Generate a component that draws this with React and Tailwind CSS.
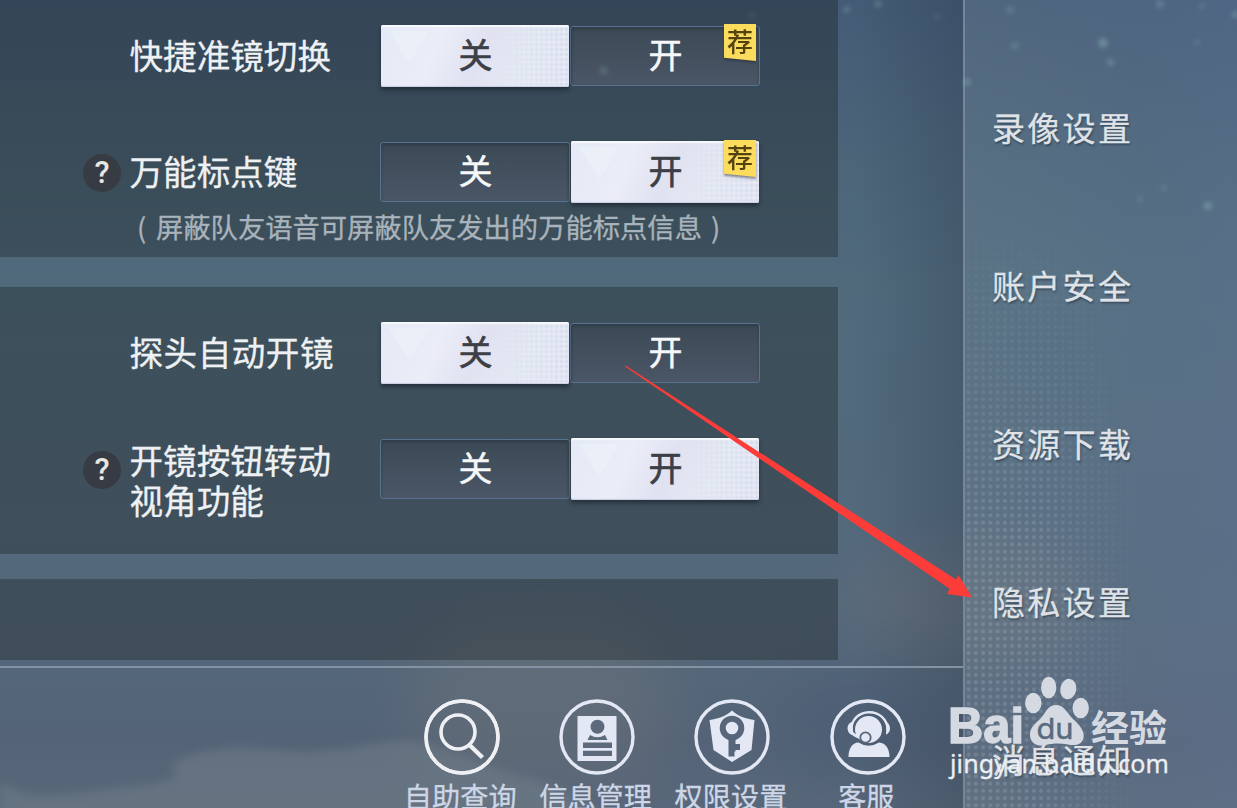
const MENU = ['录像设置', '账户安全', '资源下载', '隐私设置', '消息通知']

const SPARKS = [
  { x: 846, y: 9, s: 7, o: 0.16 },
  { x: 878, y: 4, s: 8, o: 0.14 },
  { x: 937, y: 16, s: 7, o: 0.06 },
  { x: 1010, y: 10, s: 8, o: 0.12 },
  { x: 1015, y: 46, s: 8, o: 0.12 },
  { x: 1103, y: 43, s: 10, o: 0.22 },
  { x: 1110, y: 62, s: 7, o: 0.2 },
  { x: 967, y: 82, s: 8, o: 0.18 },
  { x: 1160, y: 4, s: 8, o: 0.16 },
  { x: 1202, y: 6, s: 6, o: 0.12 },
  { x: 1197, y: 42, s: 6, o: 0.1 },
  { x: 1235, y: 14, s: 7, o: 0.2 },
  { x: 1164, y: 188, s: 6, o: 0.1 },
  { x: 1140, y: 199, s: 6, o: 0.1 },
  { x: 1208, y: 206, s: 8, o: 0.22 },
  { x: 603, y: 70, s: 9, o: 0.12 },
  { x: 752, y: 15, s: 6, o: 0.08 },
]

export default function App() {
  return (
    <div
      className="relative flex h-[808px] w-[1237px] overflow-hidden bg-[linear-gradient(180deg,#445b76_0%,#4c6579_20%,#506a7c_35%,#53697c_65%,#54677a_80%,#546377_92%,#586779_100%)]"
      style={{ fontFamily: '"Noto Sans CJK SC", sans-serif' }}
    >
      <Clouds />
      <div className="relative flex w-[963px] shrink-0 flex-col bg-[linear-gradient(90deg,transparent_89%,rgba(28,40,58,0.22)_100%)]">
        <main className="flex h-[666px] w-[838px] shrink-0 flex-col">
          <Panel className="h-[257px] pt-[25px]">
            <Row label="快捷准镜切换" value="off" recommended />
            <Row label="万能标点键" value="on" help recommended className="mt-[54px]" />
            <p className="mt-[5px] whitespace-pre pl-[137px] text-[27.3px] leading-[36px] text-[#a9b3bb] [-webkit-text-stroke:0.3px]">
              <span className="inline-block w-[19px]">(</span>屏蔽队友语音可屏蔽队友发出的万能标点信息<span className="ml-[9px]">)</span>
            </p>
          </Panel>
          <Panel className="mt-[30px] h-[267px] pt-[35px]">
            <Row label="探头自动开镜" value="off" labelClass="tracking-[0.5px]" />
            <Row label={'开镜按钮转动\n视角功能'} value="on" help className="mt-[54px]" labelClass="mt-[24px]" />
          </Panel>
          <Panel className="mt-[25px] h-[81px]" />
        </main>
        <footer className="flex flex-1 border-t-2 border-[#8492a3]">
          <div className="flex pl-[394px] pt-[31px]">
            <Shortcut label="自助查询"><SearchIcon /></Shortcut>
            <Shortcut label="信息管理"><ProfileIcon /></Shortcut>
            <Shortcut label="权限设置"><ShieldIcon /></Shortcut>
            <Shortcut label="客服"><SupportIcon /></Shortcut>
          </div>
        </footer>
      </div>

      <aside className="relative flex flex-1 flex-col border-l-2 border-[#75869a] bg-[linear-gradient(90deg,rgba(150,168,180,0.15),rgba(110,130,160,0.24)_65%,rgba(106,126,162,0.3))] pt-[48px]">
        <div className="absolute inset-x-0 bottom-0 top-[200px] bg-[radial-gradient(circle,rgba(195,215,225,0.2)_1.3px,transparent_2.6px)] bg-[size:7.25px_7.25px] mask-intersect mask-[linear-gradient(90deg,black_25%,transparent_64%),linear-gradient(180deg,transparent,black_55%)]" />
        {MENU.map((name) => (
          <a
            key={name}
            className="relative flex h-[158px] shrink-0 items-center pl-[27px] pt-[1px] text-[33px] tracking-[2.3px] text-[#dfe3e8] [-webkit-text-stroke:0.3px] text-shadow-[1px_2px_2px_rgba(40,50,65,0.6)]"
          >
            {name}
          </a>
        ))}
      </aside>

      {SPARKS.map((p) => (
        <i
          key={p.x}
          className="absolute rounded-full bg-[#9fd0c8] blur-[2px]"
          style={{ left: p.x - p.s / 2, top: p.y - p.s / 2, width: p.s, height: p.s, opacity: p.o * 1.4 }}
        />
      ))}
      <Arrow />
      <Watermark />
    </div>
  )
}

function Clouds() {
  return (
    <div className="absolute inset-0">
      <div className="absolute left-[410px] top-[620px] h-[160px] w-[260px] rounded-full bg-[#7a7b78] opacity-30 blur-[30px]" />
      <div className="absolute left-[850px] top-[545px] h-[110px] w-[240px] rounded-full bg-[#77777c] opacity-30 blur-[24px]" />
      <svg viewBox="0 0 620 130" className="absolute left-0 top-[700px] h-[130px] w-[620px] blur-[5px]">
        <path
          d="M-20 78 C0 80 12 88 26 94 C60 98 100 90 150 84 C176 80 182 74 170 66 C180 58 190 52 215 50 C250 44 275 52 310 52 C345 50 370 44 400 40 C430 40 470 60 520 76 C560 86 600 100 620 140 H-20z"
          fill="#737f89"
          opacity="0.5"
        />
      </svg>
      <div className="absolute left-[780px] top-[670px] h-[110px] w-[160px] rounded-full bg-[#485a72] opacity-40 blur-[26px]" />
    </div>
  )
}

function Panel({ className, children }) {
  return <section className={`shrink-0 bg-[#101410]/30 ${className}`}>{children}</section>
}

function Row({ label, value, help, recommended, className = '', labelClass = '' }) {
  return (
    <div className={`flex h-[62px] items-center pl-[83px] ${className}`}>
      <div className="w-[46px] pt-[2px]">
        {help && (
          <div className="flex size-[38px] items-center justify-center rounded-full bg-[#373b43] font-['Roboto'] text-[31px] font-medium text-[#e6e6e2]">
            ?
          </div>
        )}
      </div>
      <div className={`w-[251px] whitespace-pre pb-[3px] pl-[0.5px] text-[33.6px] leading-[40px] text-[#eef1f3] [-webkit-text-stroke:0.3px] ${labelClass}`}>
        {label}
      </div>
      <Toggle value={value} recommended={recommended} />
    </div>
  )
}

function Toggle({ value, recommended }) {
  return (
    <div className="relative flex h-[62px] w-[380px]">
      <Option active={value === 'off'}>关</Option>
      <Option active={value === 'on'}>开</Option>
      {recommended && (
        <div className="absolute right-[4px] top-[-1px] drop-shadow-[0_2px_1px_rgba(40,40,50,0.5)]">
          <div className="h-[37px] w-[32px] bg-[#fbdc5c] text-center text-[26px] font-medium leading-[33px] text-[#54430f] [clip-path:polygon(0_0,100%_0,100%_100%,0_91%)]">
            荐
          </div>
        </div>
      )}
    </div>
  )
}

function Option({ active, children }) {
  if (!active) {
    return (
      <div className="my-[1px] flex w-[190px] items-center justify-center rounded-[3px] border-[1.5px] border-[#587291] bg-linear-to-b from-[#3b4955] to-[#4b5666] pb-[5px] pl-[1px] text-[34px] leading-none text-[#f6f7f8] [-webkit-text-stroke:0.5px] shadow-[inset_0_2px_3px_rgba(30,40,50,0.4)]">
        {children}
      </div>
    )
  }
  return (
    <div className="relative mx-[1px] flex w-[188px] items-center justify-center rounded-[2px] bg-[linear-gradient(115deg,#e4eaf6_0%,#ebedf8_30%,#e1e2f1_52%,#e6eaf4_75%,#e9e8f6_100%)] pb-[5px] pl-[1px] text-[34px] leading-none text-[#3c4046] [-webkit-text-stroke:0.7px] shadow-[0_3px_4px_rgba(20,28,38,0.6),inset_0_2px_1px_rgba(255,255,255,0.7),inset_0_-1px_1px_#c9cbe0]">
      <div className="absolute left-[8px] top-[6px] h-[32px] w-[40px] bg-white/20 [clip-path:polygon(0_0,100%_0,50%_100%)]" />
      <div className="absolute inset-y-[2px] right-0 w-[75px] bg-[radial-gradient(circle,rgba(190,208,226,0.4)_1px,transparent_2.4px)] bg-[size:5px_5px] mask-l-from-10%" />
      <span className="relative">{children}</span>
    </div>
  )
}

function Shortcut({ label, children }) {
  return (
    <div className="flex w-[135.4px] flex-col items-center text-[#e3e8f4]">
      <svg viewBox="0 0 76 76" className="size-[76px] shrink-0">
        <circle cx="38" cy="38" r="36" fill="none" stroke="currentColor" strokeWidth="3.4" />
        {children}
      </svg>
      <span className="mt-[4px] -ml-[3px] whitespace-nowrap text-[28.2px] leading-[34px] text-[#cdd6e6] [-webkit-text-stroke:0.3px]">{label}</span>
    </div>
  )
}

function SearchIcon() {
  return (
    <g fill="none" stroke="#eef0f4" strokeWidth="3.6">
      <circle cx="38" cy="38" r="36" />
      <circle cx="34" cy="33" r="17" />
      <path d="M45.500 46 L58.500 58.500" strokeWidth="4.400" />
    </g>
  )
}

function ProfileIcon() {
  return (
    <g fill="currentColor">
      <path d="M18.500 17h39v45h-39z" />
      <g fill="#5c6a7b">
        <circle cx="38.500" cy="27.800" r="7" />
        <path d="M31 36 Q38.500 40.500 46 36 L48.500 41 H28.500z" />
        <path d="M24 43.500h29v5.500h-29zM24 51.800h29v5.200h-29z" />
      </g>
    </g>
  )
}

function ShieldIcon() {
  return (
    <g>
      <path d="M38 11.500 C44 17 52 20 60.500 21 L57.500 51 L38 63 L19.500 51 L15.500 21 C24 20 32 17 38 11.500z" fill="currentColor" />
      <circle cx="38" cy="29" r="9.300" fill="none" stroke="#57667a" strokeWidth="6" />
      <path d="M34.500 38h7v7h4.500v6h-4.500v1.500h-1v5h-6z" fill="#57667a" />
    </g>
  )
}

function SupportIcon() {
  return (
    <g>
      <circle cx="38.500" cy="30.500" r="13.500" fill="currentColor" />
      <path d="M21.500 32 C20 8 57 6 58 32" fill="none" stroke="currentColor" strokeWidth="2.400" />
      <path d="M22 23 C15 25 17 36 23.500 36zM56.500 23 C61.500 26 61 34 56 35.500z" fill="currentColor" />
      <path d="M22 34 C25 37 29 38.500 34 39" fill="none" stroke="currentColor" strokeWidth="3" />
      <circle cx="35.500" cy="38.500" r="5.200" fill="currentColor" stroke="#59667b" strokeWidth="1.800" />
      <path d="M18.500 58 C18.500 50 22 43.500 28.500 43.500 Q38.500 50 49 43.500 C56 44 59.500 50 59.500 58z" fill="currentColor" />
    </g>
  )
}

// tapered pointer from the toggle to the privacy entry
function Arrow() {
  return (
    <svg viewBox="0 0 350 234" className="absolute left-[624px] top-[365px] h-[234px] w-[350px]">
      <polygon points="1,0.500 2,0.800 332,214.500 334.700,210.300 348,232.500 323,229 325.500,223.700 1,1.500" fill="#fb3c38" />
    </svg>
  )
}

function Watermark() {
  return (
    <svg viewBox="0 0 230 110" className="absolute left-[945px] top-[672px] h-[110px] w-[230px]">
      <g fill="#d5dae2">
        <text x="3" y="70.500" fontFamily="Liberation Sans" fontWeight="700" fontSize="50" textLength="76" lengthAdjust="spacingAndGlyphs" stroke="#d5dae2" strokeWidth="1.4">Bai</text>
        <ellipse cx="88.300" cy="31" rx="8.200" ry="10.300" />
        <ellipse cx="103.700" cy="15.500" rx="7.600" ry="10.800" />
        <ellipse cx="123.300" cy="17" rx="8" ry="10.300" transform="rotate(10 123 17)" />
        <ellipse cx="135.700" cy="36" rx="8.200" ry="10.300" />
        <path d="M111 33 C119 33 122 41 128 47 C135 53 140 60 138.500 66 C137 73 130 74 123 72.500 C115 71 108 71 101 73 C93 75 86 72 85 64 C84 56 91 51 96 46 C101 40 103 33 111 33z" />
        <text x="146" y="69.500" fontFamily="Noto Sans CJK SC" fontWeight="700" fontSize="37" textLength="76" lengthAdjust="spacingAndGlyphs">经验</text>
      </g>
      <text x="91.500" y="67" fontFamily="Inter" fontWeight="400" fontSize="29" textLength="37" lengthAdjust="spacingAndGlyphs" fill="#596a7e" stroke="#596a7e" strokeWidth="0.500">du</text>
      <text x="5" y="101" fontFamily="Noto Sans" fontSize="25" textLength="219" fill="#eceff3" stroke="#eceff3" strokeWidth="0.300">jingyan.baidu.com</text>
    </svg>
  )
}
